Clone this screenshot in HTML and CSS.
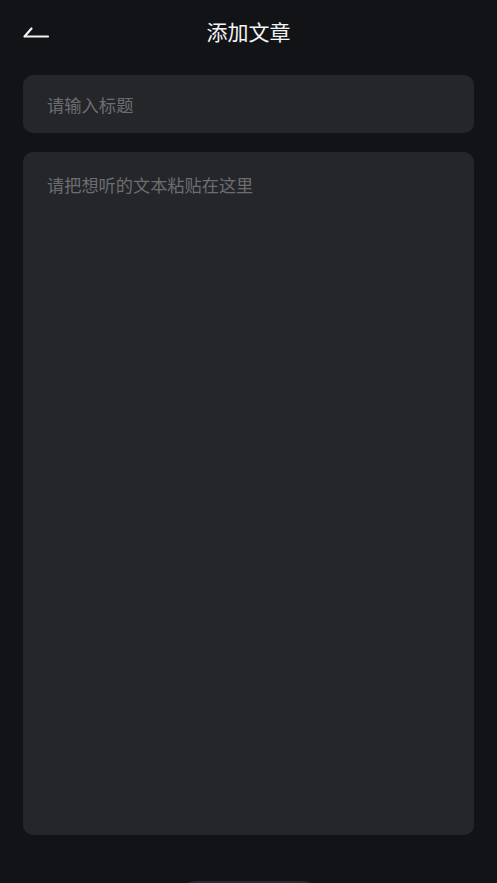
FILE: index.html
```html
<!DOCTYPE html>
<html lang="zh-CN">
<head>
    <meta charset="UTF-8">
    <meta name="viewport" content="width=device-width, initial-scale=1.0">
    <title>添加文章</title>
    <link rel="stylesheet" href="styles.css">
</head>
<body>
    <div class="page">
        <header class="nav-bar">
            <button class="back-btn" aria-label="返回">
                <svg width="28" height="16" viewBox="0 0 28 16">
                    <path d="M2.5 13.5 L9.5 5.5 M2.5 13.5 H26" stroke="#f2f2f2" stroke-width="2.2" fill="none" stroke-linecap="round" stroke-linejoin="round"/>
                </svg>
            </button>
            <h1>添加文章</h1>
            <span class="nav-spacer"></span>
        </header>

        <div class="form">
            <input type="text" class="title-input" placeholder="请输入标题">
            <textarea class="content-input" placeholder="请把想听的文本粘贴在这里"></textarea>
        </div>

        <div class="actions">
            <div class="submit-btn"></div>
        </div>
    </div>
</body>
</html>
```

FILE: styles.css
```css
body {
    margin: 0;
    padding: 0;
    background: #121317;
    color: #f2f2f2;
    font-family: "Noto Sans CJK SC", "Noto Sans", sans-serif;
    height: 883px;
    overflow: hidden;
}

.page {
    display: flex;
    flex-direction: column;
}

.nav-bar {
    display: grid;
    grid-template-columns: 60px 1fr 60px;
    align-items: center;
    height: 62px;
    padding: 0 22px;
}

.back-btn {
    background: none;
    border: none;
    padding: 0;
    width: 30px;
    height: 20px;
    display: flex;
    align-items: center;
    cursor: pointer;
}

.nav-bar h1 {
    margin: 0;
    text-align: center;
    font-size: 21px;
    font-weight: 400;
    color: #f4f4f4;
}

.form {
    display: flex;
    flex-direction: column;
    gap: 19px;
    padding: 13px 23px 0;
}

.title-input,
.content-input {
    background: #25262a;
    border: none;
    border-radius: 10px;
    color: #e0e0e0;
    font-family: inherit;
    outline: none;
    box-sizing: border-box;
    width: 100%;
}

.title-input {
    height: 58px;
    padding: 0 24px;
    font-size: 17.3px;
}

.content-input {
    height: 683px;
    padding: 20px 24px;
    font-size: 17.2px;
    line-height: 26px;
    resize: none;
}

.title-input::placeholder,
.content-input::placeholder {
    color: #6c6d71;
}

.actions {
    display: flex;
    justify-content: center;
    padding-top: 46px;
}

.submit-btn {
    width: 152px;
    height: 48px;
    border-radius: 24px;
    background: #2a2b30;
}
```
